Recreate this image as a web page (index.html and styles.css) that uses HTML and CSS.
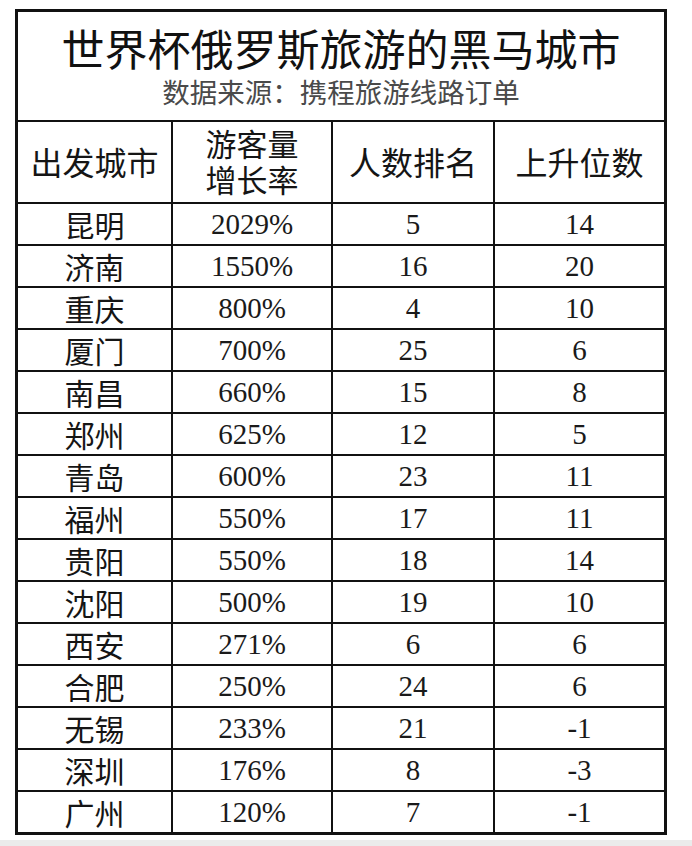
FILE: index.html
```html
<!DOCTYPE html>
<html lang="zh-CN">
<head>
<meta charset="utf-8">
<title>世界杯俄罗斯旅游的黑马城市</title>
<link rel="stylesheet" href="styles.css">
</head>
<body>
<div class="page">
  <div class="sheet">
    <div class="cell title-cell">
      <div class="title">世界杯俄罗斯旅游的黑马城市</div>
      <div class="subtitle">数据来源：携程旅游线路订单</div>
    </div>
    <div class="cell head">出发城市</div>
    <div class="cell head two"><span class="line">游客量</span><span class="line">增长率</span></div>
    <div class="cell head">人数排名</div>
    <div class="cell head">上升位数</div>

    <div class="cell city">昆明</div><div class="cell num">2029%</div><div class="cell num">5</div><div class="cell num">14</div>
    <div class="cell city">济南</div><div class="cell num">1550%</div><div class="cell num">16</div><div class="cell num">20</div>
    <div class="cell city">重庆</div><div class="cell num">800%</div><div class="cell num">4</div><div class="cell num">10</div>
    <div class="cell city">厦门</div><div class="cell num">700%</div><div class="cell num">25</div><div class="cell num">6</div>
    <div class="cell city">南昌</div><div class="cell num">660%</div><div class="cell num">15</div><div class="cell num">8</div>
    <div class="cell city">郑州</div><div class="cell num">625%</div><div class="cell num">12</div><div class="cell num">5</div>
    <div class="cell city">青岛</div><div class="cell num">600%</div><div class="cell num">23</div><div class="cell num">11</div>
    <div class="cell city">福州</div><div class="cell num">550%</div><div class="cell num">17</div><div class="cell num">11</div>
    <div class="cell city">贵阳</div><div class="cell num">550%</div><div class="cell num">18</div><div class="cell num">14</div>
    <div class="cell city">沈阳</div><div class="cell num">500%</div><div class="cell num">19</div><div class="cell num">10</div>
    <div class="cell city">西安</div><div class="cell num">271%</div><div class="cell num">6</div><div class="cell num">6</div>
    <div class="cell city">合肥</div><div class="cell num">250%</div><div class="cell num">24</div><div class="cell num">6</div>
    <div class="cell city">无锡</div><div class="cell num">233%</div><div class="cell num">21</div><div class="cell num">-1</div>
    <div class="cell city">深圳</div><div class="cell num">176%</div><div class="cell num">8</div><div class="cell num">-3</div>
    <div class="cell city">广州</div><div class="cell num">120%</div><div class="cell num">7</div><div class="cell num">-1</div>
  </div>
  <div class="bottom-bar"></div>
</div>
</body>
</html>
```

FILE: styles.css
```css
html, body {
  margin: 0;
  padding: 0;
  background: #ffffff;
  overflow: hidden;
  height: 846px;
}

.page {
  padding: 9px 0 0 15px;
}

.sheet {
  width: 646px;
  padding: 3px;
  background: #111111;
  display: grid;
  grid-template-columns: 153px 158px 160px 169px;
  grid-template-rows: 108px 80px repeat(15, 40px);
  gap: 2px;
}

.cell {
  background: #ffffff;
  display: flex;
  align-items: center;
  justify-content: center;
  color: #151515;
  font-family: "Noto Sans CJK SC", "Noto Sans", sans-serif;
  box-sizing: border-box;
}

.title-cell {
  grid-column: 1 / -1;
  flex-direction: column;
  justify-content: flex-start;
  padding-top: 15px;
  font-family: "Liberation Sans", "Noto Sans CJK SC", sans-serif;
}

.title {
  font-size: 43px;
  line-height: 48px;
  color: #111111;
  white-space: nowrap;
}

.subtitle {
  margin-top: 3px;
  font-size: 27.5px;
  line-height: 31px;
  color: #4a4a4a;
  white-space: nowrap;
}

.head {
  padding-top: 4px;
  font-family: "Liberation Sans", "Noto Sans CJK SC", sans-serif;
  font-size: 32px;
  line-height: 36px;
  text-align: center;
}

.two {
  flex-direction: column;
  font-size: 31px;
}

.line {
  display: block;
  line-height: 36px;
}

.city {
  font-size: 30px;
  line-height: 40px;
}

.num {
  font-family: "Liberation Serif", "DejaVu Serif", serif;
  font-size: 29px;
  line-height: 40px;
  color: #1a1a1a;
}

.bottom-bar {
  margin-top: 5px;
  margin-left: -15px;
  height: 10px;
  background: #ebebeb;
}
```
